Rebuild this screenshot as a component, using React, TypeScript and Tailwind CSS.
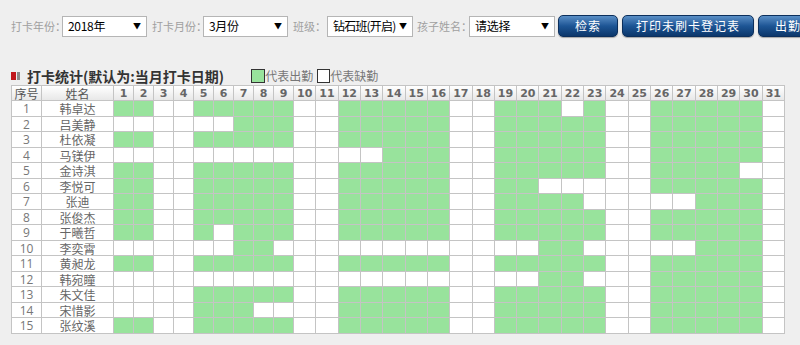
import React from 'react'

const cjk = { fontFamily: '"Microsoft YaHei", "Noto Sans CJK SC", sans-serif' }

// each row: days 1-2, 5-9, 12-16, 19-23, 26-30 ('1' = 出勤)
const rows: [string, string[]][] = [
  ['韩卓达', ['11', '11111', '11111', '11101', '11111']],
  ['吕美静', ['00', '00111', '11111', '11111', '11111']],
  ['杜依凝', ['11', '11111', '11111', '11111', '11111']],
  ['马镁伊', ['00', '00000', '00111', '11111', '11111']],
  ['金诗淇', ['11', '11111', '11111', '11111', '11110']],
  ['李悦可', ['11', '11111', '11111', '11000', '11111']],
  ['张迪', ['11', '11111', '11111', '11110', '00111']],
  ['张俊杰', ['11', '11111', '11111', '11111', '11111']],
  ['于曦哲', ['11', '10111', '11111', '11111', '11111']],
  ['李奕霄', ['00', '00110', '00000', '00110', '00111']],
  ['黄昶龙', ['11', '11111', '11111', '11111', '11111']],
  ['韩宛瞳', ['00', '00000', '00000', '00110', '11111']],
  ['朱文佳', ['00', '11111', '11111', '11111', '11111']],
  ['宋惜影', ['00', '11100', '11111', '11111', '11111']],
  ['张纹溪', ['11', '11111', '11111', '11111', '11111']],
]

const days = Array.from({ length: 31 }, (_, i) => i + 1)

function Select({ value, w, tight }: { value: string; w: string; tight?: boolean }) {
  return (
    <div className={`${w} h-[21px] shrink-0 bg-white border border-[#b5b5b5] flex items-center justify-between pl-[5px] pr-[5px]`}>
      <span className={`text-[12px] text-black ${tight ? 'tracking-[-0.8px]' : 'tracking-[-0.3px]'}`} style={cjk}>
        {value}
      </span>
      <span className="text-[8px] text-black ml-[2px]">▼</span>
    </div>
  )
}

function Btn({ label, w }: { label: string; w: string }) {
  return (
    <button
      className={`${w} h-[22px] shrink-0 rounded-[5px] border border-[#0c2f5c] bg-gradient-to-b from-[#5a8fc6] via-[#1d5595] to-[#0c376b] text-white text-[12px] tracking-[1px] shadow-[0_1px_1px_rgba(0,0,0,0.3)]`}
      style={cjk}
    >
      {label}
    </button>
  )
}

export default function App() {
  return (
    <div className="w-[800px] h-[345px] overflow-hidden bg-[#efefef]">
      {/* Search bar */}
      <div className="flex items-center pl-[11px] pt-[15px] whitespace-nowrap text-[11px] text-[#a0a0a0]" style={cjk}>
        <span className="w-[51px] shrink-0">打卡年份：</span>
        <Select value="2018年" w="w-[85px]" />
        <span className="w-[51px] shrink-0 ml-[5px]">打卡月份：</span>
        <Select value="3月份" w="w-[85px]" />
        <span className="w-[34px] shrink-0 ml-[5px]">班级：</span>
        <Select value="钻石班(开启)" w="w-[86px]" tight />
        <span className="w-[52px] shrink-0 ml-[4px]">孩子姓名：</span>
        <Select value="请选择" w="w-[86px]" />
        <Btn label="检索" w="w-[60px] ml-[3px]" />
        <Btn label="打印未刷卡登记表" w="w-[132px] ml-[4px]" />
        <Btn label="出勤" w="w-[60px] ml-[4px]" />
      </div>

      {/* Title */}
      <div className="flex items-center pl-[11px] mt-[30px] h-[18px]" style={cjk}>
        <span className="w-[5px] h-[8px] bg-[#c0171d]" />
        <span className="w-[3px] h-[8px] bg-[#8a8a8a] ml-[1px]" />
        <span className="ml-[7px] text-[14px] leading-[16px] font-bold text-[#333]">打卡统计(默认为:当月打卡日期)</span>
        <span className="ml-[27px] w-[14px] h-[14px] bg-[#98e39c] border border-[#333]" />
        <span className="text-[12px] leading-[14px] text-[#777]">代表出勤</span>
        <span className="ml-[4px] w-[13px] h-[14px] bg-white border border-[#333]" />
        <span className="text-[12px] leading-[14px] text-[#777]">代表缺勤</span>
      </div>

      {/* Table */}
      <table className="ml-[11px] w-[774px] table-fixed border-collapse bg-white">
        <colgroup>
          <col className="w-[30px]" />
          <col className="w-[72px]" />
          {days.map((d) => (
            <col key={d} className={d < 10 ? 'w-[20px]' : ''} />
          ))}
        </colgroup>
        <thead>
          <tr className="h-[15px] bg-gradient-to-b from-white to-[#e6e6e6]">
            <th className="border border-[#c4c4c4] text-[12px] font-normal text-[#555] p-0 leading-[13px]" style={cjk}>序号</th>
            <th className="border border-[#c4c4c4] text-[12px] font-normal text-[#555] p-0 leading-[13px]" style={cjk}>姓名</th>
            {days.map((d) => (
              <th
                key={d}
                className="border border-[#c4c4c4] text-[11px] font-bold text-[#666] p-0 leading-[13px]"
                style={{ fontFamily: '"DejaVu Sans", Verdana, sans-serif' }}
              >
                {d}
              </th>
            ))}
          </tr>
        </thead>
        <tbody>
          {rows.map(([name, blocks], i) => {
            const s = blocks[0] + '00' + blocks[1] + '00' + blocks[2] + '00' + blocks[3] + '00' + blocks[4] + '0'
            return (
              <tr key={i} className={i % 2 === 0 ? 'h-[16px]' : 'h-[15px]'}>
                <td
                  className="border border-[#c4c4c4] text-center text-[12px] text-[#777] p-0 leading-[13px]"
                  style={{ fontFamily: '"Open Sans", sans-serif' }}
                >
                  {i + 1}
                </td>
                <td className="border border-[#c4c4c4] text-center text-[12px] text-[#666] p-0 leading-[13px]" style={cjk}>
                  {name}
                </td>
                {s.split('').map((c, j) => (
                  <td key={j} className={`border border-[#c4c4c4] p-0 ${c === '1' ? 'bg-[#98e39c]' : 'bg-white'}`} />
                ))}
              </tr>
            )
          })}
        </tbody>
      </table>
    </div>
  )
}
